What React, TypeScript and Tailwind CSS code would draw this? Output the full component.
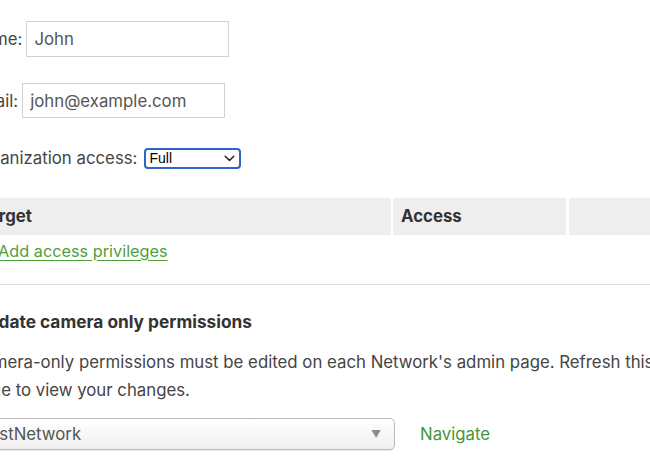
import React from "react";

export default function App() {
  return (
    <div className="w-[650px] h-[471px] overflow-hidden bg-white text-[#444] text-[16.8px]" style={{ fontFamily: "Inter, 'Liberation Sans', sans-serif" }}>
      <div className="ml-[-29px] w-[720px] pt-[21px] flex flex-col">
        {/* Name */}
        <div className="flex items-center h-[36px]">
          <span className="text-[#444] pt-[2px]">Name:</span>
          <div className="ml-[4px] w-[203px] h-[36px] border border-[#d2d2d2] flex items-center pl-[7px] pt-[2px] text-[#555]">John</div>
        </div>
        {/* Email */}
        <div className="flex items-center h-[35px] mt-[26px]">
          <span className="text-[#444] pt-[2px]">Email:</span>
          <div className="ml-[4px] w-[203px] h-[35px] border border-[#d2d2d2] flex items-center pl-[7px] pt-[2px] text-[#555]">john@example.com</div>
        </div>
        {/* Org access */}
        <div className="flex items-center h-[20px] mt-[30px]">
          <span className="text-[#444] pt-[1px]">Organization access:</span>
          <div className="ml-[7px] w-[97px] h-[21px] border-2 border-[#2d64c8] rounded-[4px] flex items-center justify-between pl-[3px] pr-[4px] text-[14px] text-black" style={{ fontFamily: "'Liberation Sans', Arial, sans-serif" }}>
            <span>Full</span>
            <svg width="11" height="7" viewBox="0 0 11 7" fill="none">
              <path d="M1.2 1.2 L5.5 5.5 L9.8 1.2" stroke="#222" strokeWidth="1.5" strokeLinecap="round" strokeLinejoin="round" />
            </svg>
          </div>
        </div>
        {/* Table header */}
        <div className="flex gap-[2px] mt-[30px] h-[37px] font-bold text-[#333]">
          <div className="w-[420px] bg-[#eeeeee] flex items-center pl-[8px] pt-[1px]">Target</div>
          <div className="w-[173px] bg-[#eeeeee] flex items-center pl-[8px] pt-[1px]">Access</div>
          <div className="flex-1 ml-[1px] bg-[#eeeeee]"></div>
        </div>
        {/* Link row */}
        <div className="h-[30px] flex items-center pl-[27px] pt-[2px]">
          <span className="text-[#4f9f3d] underline underline-offset-[3px] text-[16.3px]">Add access privileges</span>
        </div>
        <div className="mt-[19px] border-t border-[#dddddd]"></div>
        {/* Heading */}
        <div className="mt-[25px] font-bold text-[#333] leading-[24px] pl-[4px] text-[17.3px]">Update camera only permissions</div>
        <p className="mt-[14px] leading-[28px] text-[#444] w-[690px]">
          Camera-only permissions must be edited on each Network's admin page. Refresh this page to view your changes.
        </p>
        {/* Network select */}
        <div className="flex items-center mt-[14px]">
          <div className="w-[424px] h-[32px] border border-[#b9b9b9] rounded-[5px] bg-gradient-to-b from-white to-[#efefef] shadow-[0_1px_1px_rgba(0,0,0,0.08)] flex items-center justify-between pl-[8px] pr-[13px] pt-[1px] text-[#555]">
            <span>TestNetwork</span>
            <span className="text-[#8a8a8a] text-[10px]">▼</span>
          </div>
          <span className="ml-[25px] text-[#46943a] pt-[1px]">Navigate</span>
        </div>
      </div>
    </div>
  );
}
